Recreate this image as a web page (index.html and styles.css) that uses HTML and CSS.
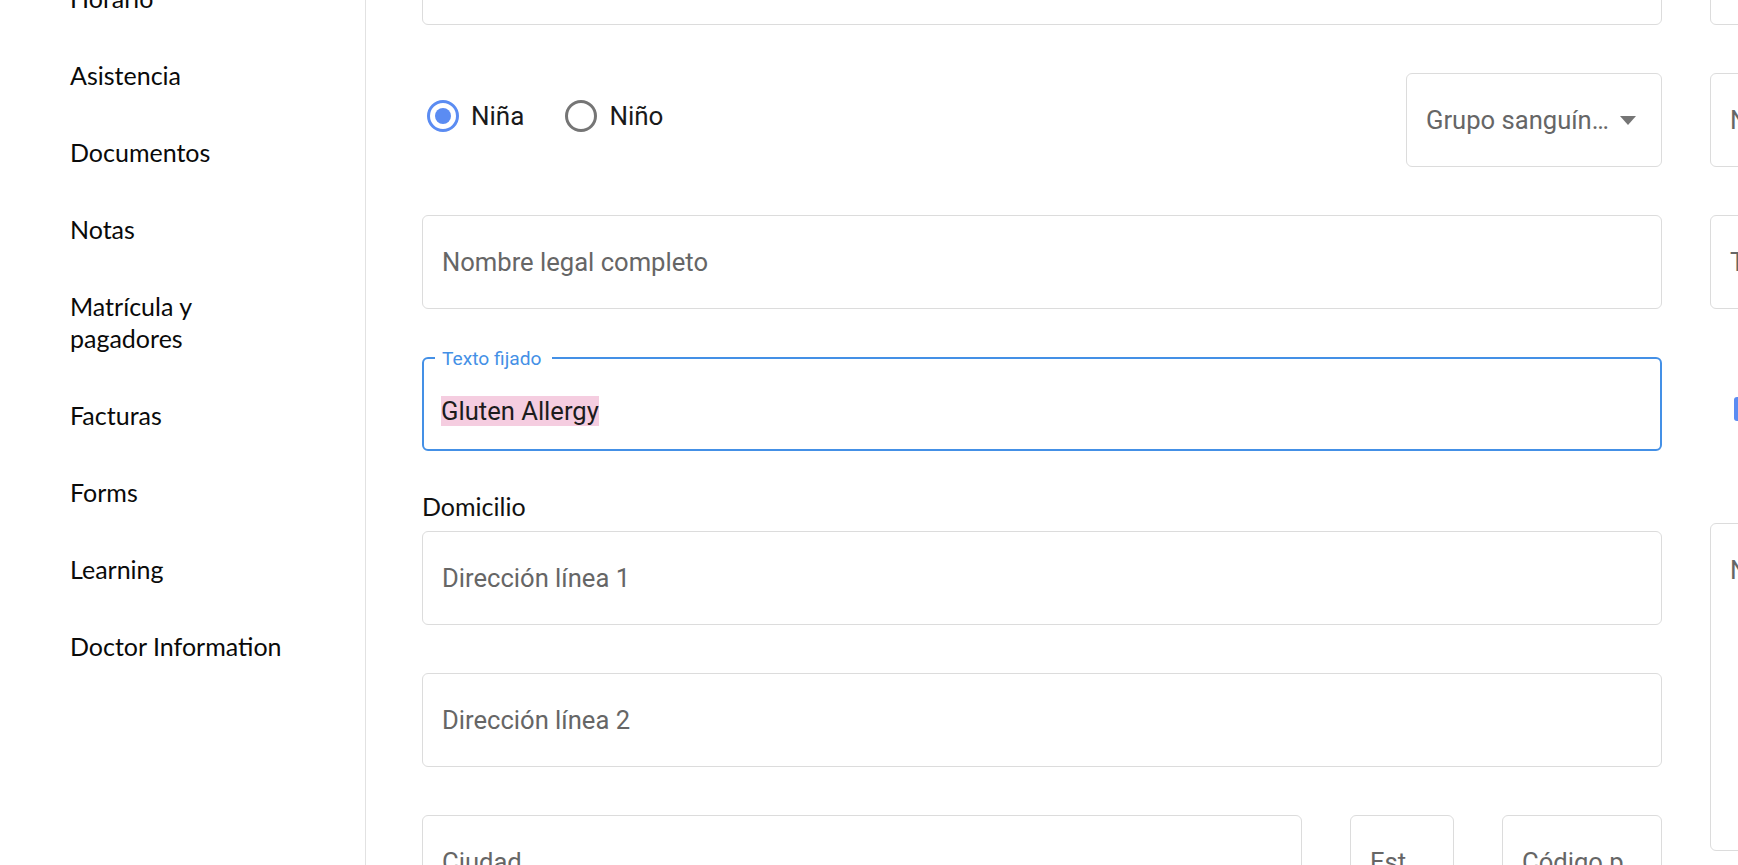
FILE: index.html
```html
<!DOCTYPE html>
<html lang="es">
<head>
<meta charset="utf-8">
<title>Perfil</title>
<link rel="stylesheet" href="styles.css">
</head>
<body>
<div class="app">
  <nav class="sidebar">
    <ul class="nav">
      <li class="nav-item">Horario</li>
      <li class="nav-item">Asistencia</li>
      <li class="nav-item">Documentos</li>
      <li class="nav-item">Notas</li>
      <li class="nav-item">Matrícula y<br>pagadores</li>
      <li class="nav-item">Facturas</li>
      <li class="nav-item">Forms</li>
      <li class="nav-item">Learning</li>
      <li class="nav-item">Doctor Information</li>
    </ul>
  </nav>
  <main class="content">
    <div class="form">
      <div class="col col-main">
        <div class="field mb48"><span class="placeholder">Apellido</span></div>

        <div class="radio-row mb48">
          <div class="radios">
            <label class="radio">
              <span class="radio-circle checked"><span class="radio-dot"></span></span>
              <span class="radio-label">Niña</span>
            </label>
            <label class="radio">
              <span class="radio-circle"></span>
              <span class="radio-label">Niño</span>
            </label>
          </div>
          <div class="field select">
            <span class="placeholder ellipsis">Grupo sanguíneo</span>
            <svg class="caret" width="16" height="9" viewBox="0 0 16 9"><path d="M0 0 L16 0 L8 9 Z" fill="#757575"/></svg>
          </div>
        </div>

        <div class="field mb48"><span class="placeholder">Nombre legal completo</span></div>

        <div class="field focused">
          <span class="float-label">Texto fijado</span>
          <span class="value"><span class="mark">Gluten Allergy</span></span>
        </div>

        <div class="section-label">Domicilio</div>

        <div class="field mb48"><span class="placeholder">Dirección línea 1</span></div>
        <div class="field mb48"><span class="placeholder">Dirección línea 2</span></div>

        <div class="city-row">
          <div class="field city"><span class="placeholder">Ciudad</span></div>
          <div class="field state"><span class="placeholder ellipsis">Estado</span></div>
          <div class="field zip"><span class="placeholder ellipsis">Código postal</span></div>
        </div>
      </div>

      <div class="col col-side">
        <div class="field mb48"><span class="placeholder">Segundo nombre</span></div>
        <div class="field mb48"><span class="placeholder">Nacionalidad</span></div>
        <div class="field mb48"><span class="placeholder">Tipo de identificación</span></div>
        <div class="check-row">
          <span class="checkbox"></span>
          <span class="check-label">Recibir notificaciones</span>
        </div>
        <div class="field textarea"><span class="placeholder">Notas adicionales</span></div>
      </div>
    </div>
  </main>
</div>
</body>
</html>
```

FILE: styles.css
```css
* { box-sizing: border-box; }

html, body {
  margin: 0;
  padding: 0;
  background: #ffffff;
  overflow: hidden;
}

.app {
  display: flex;
  height: 865px;
  overflow: hidden;
}

/* Sidebar */
.sidebar {
  width: 366px;
  flex-shrink: 0;
  border-right: 1px solid #e2e2e2;
  overflow: hidden;
}

.nav {
  list-style: none;
  margin: -40px 0 0 0;
  padding: 0 0 0 70px;
  font-family: Lato, "Open Sans", sans-serif;
  font-size: 25px;
  line-height: 32px;
  color: #0a0a0a;
}

.nav-item {
  padding: 22px 0 23px 0;
}

/* Content */
.content {
  flex: 1;
  overflow: hidden;
}

.form {
  display: flex;
  gap: 48px;
  padding-left: 56px;
  margin-top: -69px;
}

.col {
  display: flex;
  flex-direction: column;
  flex-shrink: 0;
}

.col-main { width: 1240px; }
.col-side { width: 420px; }

.mb48 { margin-bottom: 48px; }

.field {
  position: relative;
  height: 94px;
  border: 1px solid #dcdcdc;
  border-radius: 6px;
  display: flex;
  align-items: center;
  padding: 0 19px;
  font-family: Roboto, "Noto Sans", sans-serif;
  font-size: 25.6px;
  color: #666666;
  background: #fff;
}

.placeholder {
  color: #666666;
  white-space: nowrap;
}

.ellipsis {
  overflow: hidden;
  text-overflow: ellipsis;
  min-width: 0;
}

/* Radio row */
.radio-row {
  display: flex;
  justify-content: space-between;
  align-items: flex-start;
}

.radios {
  display: flex;
  align-items: center;
  height: 42px;
  margin-top: 22px;
  padding-left: 5px;
  gap: 41px;
  font-family: Roboto, "Noto Sans", sans-serif;
  font-size: 26px;
  color: #1a1a1a;
}

.radio {
  display: flex;
  align-items: center;
  gap: 12px;
}

.radio-circle {
  width: 32px;
  height: 32px;
  border-radius: 50%;
  border: 3.5px solid #757575;
  display: flex;
  align-items: center;
  justify-content: center;
}

.radio-circle.checked {
  border-color: #5b8cf2;
}

.radio-dot {
  width: 16px;
  height: 16px;
  border-radius: 50%;
  background: #5b8cf2;
}

.select {
  width: 256px;
  padding-right: 25px;
  gap: 8px;
}

.select .placeholder { flex: 1; }

.caret { flex-shrink: 0; }

/* Focused outlined field */
.field.focused {
  border: 2px solid #4490e6;
  padding: 14px 17px 0 17px;
  margin-bottom: 39px;
}

.float-label {
  position: absolute;
  left: 11px;
  top: -11px;
  line-height: 22px;
  padding: 0 11px 0 7px;
  background: #fff;
  font-size: 19.2px;
  color: #4490e6;
}

.value {
  color: #1c1c1c;
}

.mark {
  background: #f5cde0;
}

.section-label {
  font-family: Lato, "Open Sans", sans-serif;
  font-size: 25px;
  line-height: 32px;
  color: #111;
  margin-bottom: 9px;
}

.city-row {
  display: flex;
  gap: 48px;
}

.city { flex: 1; }
.state { width: 104px; flex-shrink: 0; }
.zip { width: 160px; flex-shrink: 0; }

/* Side column */
.check-row {
  height: 94px;
  padding: 40px 0 0 24px;
  display: flex;
  align-items: flex-start;
  gap: 12px;
  margin-bottom: 72px;
  font-family: Roboto, "Noto Sans", sans-serif;
  font-size: 24px;
  color: #1a1a1a;
}

.checkbox {
  width: 24px;
  height: 24px;
  border-radius: 3px;
  background: #5b8cf2;
  flex-shrink: 0;
}

.textarea {
  height: 328px;
  align-items: flex-start;
  padding-top: 31px;
}
```
